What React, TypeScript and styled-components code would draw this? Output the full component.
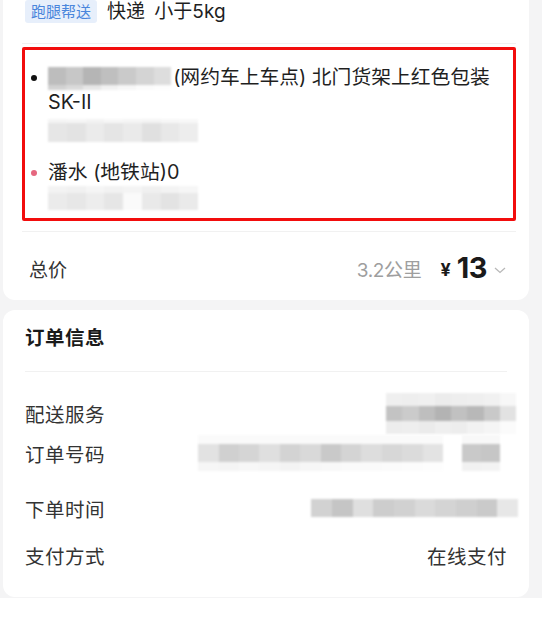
import React from "react";
import styled, { createGlobalStyle } from "styled-components";

const Global = createGlobalStyle`
  html, body { margin: 0; padding: 0; background: #ffffff; }
  body { font-family: Inter, "Noto Sans CJK SC", sans-serif; color: #222; }
  * { box-sizing: border-box; }
`;

const Screen = styled.div`
  width: 542px;
  height: 598px;
  background: #f4f4f5;
  padding-left: 3px;
  display: flex;
  flex-direction: column;
`;

const TopCard = styled.section`
  width: 526px;
  background: #ffffff;
  border-radius: 0 0 12px 12px;
  display: flex;
  flex-direction: column;
`;

const InfoCard = styled.section`
  width: 526px;
  margin-top: 10px;
  background: #ffffff;
  border-radius: 12px;
  padding: 14px 22px 22px 22px;
  display: flex;
  flex-direction: column;
`;

const Header = styled.div`
  height: 23px;
  padding-left: 22px;
  display: flex;
  align-items: center;
  gap: 10px;
`;

const Tag = styled.span`
  height: 23px;
  padding: 0 6px;
  border-radius: 3px;
  background: #e7effb;
  color: #4a86dc;
  font-size: 15px;
  line-height: 23px;
  display: inline-flex;
  align-items: center;
`;

const HeaderText = styled.span`
  font-size: 19px;
  line-height: 23px;
  color: #1f1f1f;
  word-spacing: 4px;
`;

const Divider = styled.div<{ $mt: number; $inset?: boolean }>`
  height: 1px;
  background: #f1f1f1;
  margin-top: ${(p) => p.$mt}px;
  margin-left: ${(p) => (p.$inset ? 19 : 0)}px;
  margin-right: ${(p) => (p.$inset ? 13 : 0)}px;
`;

const AddressBox = styled.div`
  margin: 3px 13px 0 19px;
  height: 174px;
  border: 3px solid #f20d0d;
  border-radius: 2px;
  padding: 15px 10px 0 6px;
  display: flex;
  flex-direction: column;
`;

const Stop = styled.div<{ $mt: number }>`
  display: flex;
  align-items: flex-start;
  margin-top: ${(p) => p.$mt}px;
`;

const Dot = styled.span<{ $color: string }>`
  width: 6px;
  height: 6px;
  border-radius: 50%;
  background: ${(p) => p.$color};
  margin-top: 10px;
  margin-right: 11px;
  flex: none;
`;

const StopBody = styled.div`
  display: flex;
  flex-direction: column;
`;

const StopText = styled.div`
  font-size: 19.8px;
  line-height: 25px;
  color: #1f1f1f;
  white-space: nowrap;
`;

const InlineMosaic = styled.span`
  display: inline-block;
  vertical-align: top;
  margin-top: 2px;
  margin-right: 2px;
`;

const MosaicGrid = styled.div<{ $cols: number; $cell: number }>`
  display: grid;
  grid-template-columns: repeat(${(p) => p.$cols}, ${(p) => p.$cell}px);
  filter: blur(1.3px);
`;

const Cell = styled.span<{ $c: string; $h: number }>`
  display: block;
  height: ${(p) => p.$h}px;
  background: ${(p) => p.$c};
`;

const MosaicSpace = styled.div<{ $mt: number; $mr?: number }>`
  margin-top: ${(p) => p.$mt}px;
  margin-right: ${(p) => p.$mr ?? 0}px;
`;

type MosaicProps = { cell: number; rows: { h: number; colors: string[] }[] };

const Mosaic: React.FC<MosaicProps> = ({ cell, rows }) => (
  <MosaicGrid $cols={rows[0].colors.length} $cell={cell}>
    {rows.map((r, ri) =>
      r.colors.map((c, ci) => <Cell key={`${ri}-${ci}`} $c={c} $h={r.h} />)
    )}
  </MosaicGrid>
);

const TotalRow = styled.div`
  height: 68px;
  padding: 4px 22px 0 26px;
  display: flex;
  align-items: center;
  justify-content: space-between;
`;

const TotalLabel = styled.span`
  font-size: 19px;
  color: #333;
`;

const PriceGroup = styled.div`
  display: flex;
  align-items: center;
`;

const Distance = styled.span`
  font-size: 19px;
  color: #9e9e9e;
  margin-right: 19px;
  letter-spacing: -0.3px;
`;

const Yen = styled.span`
  font-size: 18px;
  font-weight: 700;
  color: #1a1a1a;
  margin-right: 6px;
  margin-top: 3px;
`;

const Amount = styled.span`
  font-size: 29px;
  font-weight: 700;
  color: #1a1a1a;
  line-height: 30px;
  letter-spacing: -0.5px;
`;

const Chevron = styled.svg`
  width: 14px;
  height: 10px;
  margin-left: 6px;
  margin-top: 4px;
`;

const Title = styled.h2`
  margin: 0;
  font-size: 19.5px;
  line-height: 28px;
  font-weight: 700;
  color: #1a1a1a;
  letter-spacing: 0.5px;
`;

const Row = styled.div<{ $mt: number }>`
  height: 40px;
  margin-top: ${(p) => p.$mt}px;
  display: flex;
  align-items: center;
  justify-content: space-between;
`;

const Label = styled.span`
  font-size: 19.5px;
  color: #333;
  letter-spacing: 0.5px;
`;

const Value = styled.span`
  font-size: 19.5px;
  color: #333;
  letter-spacing: 0.5px;
`;

const ValueGroup = styled.div<{ $gap: number; $mr?: number }>`
  display: flex;
  align-items: center;
  gap: ${(p) => p.$gap}px;
  margin-right: ${(p) => p.$mr ?? 0}px;
`;

const addr1Mosaic: MosaicProps = {
  cell: 17.6,
  rows: [
    { h: 18, colors: ["#bdbdbd", "#c7c7c7", "#b5b5b5", "#bfbfbf", "#cacaca", "#d4d4d4", "#dddddd"] },
    { h: 5, colors: ["#d2d2d2", "#dadada", "#e6e6e6", "#f1f1f1", "#f7f7f7", "#fbfbfb", "#fdfdfd"] },
  ],
};

const blur1: MosaicProps = {
  cell: 18.75,
  rows: [
    { h: 4, colors: ["#f4f4f4", "#f6f6f6", "#f3f3f3", "#f7f7f7", "#f5f5f5", "#f4f4f4", "#f7f7f7", "#f8f8f8"] },
    { h: 19, colors: ["#e6e6e6", "#e3e3e3", "#ebebeb", "#e5e5e5", "#eaeaea", "#e0e0e0", "#e8e8e8", "#ededed"] },
  ],
};

const blur2: MosaicProps = {
  cell: 18.75,
  rows: [
    { h: 7, colors: ["#f3f3f3", "#f1f1f1", "#f5f5f5", "#f2f2f2", "#f4f4f4", "#f0f0f0", "#f3f3f3", "#f6f6f6"] },
    { h: 17, colors: ["#ebebeb", "#e7e7e7", "#ededed", "#e6e6e6", "#fafafa", "#e9e9e9", "#e3e3e3", "#eaeaea"] },
  ],
};

const serviceMosaic: MosaicProps = {
  cell: 16.25,
  rows: [
    { h: 13, colors: ["#efefef", "#eeeeee", "#f0f0f0", "#ececec", "#eeeeee", "#efefef", "#f1f1f1", "#f7f7f7"] },
    { h: 15, colors: ["#c3c3c3", "#cbcbcb", "#bebebe", "#b3b3b3", "#c1c1c1", "#b8b8b8", "#c9c9c9", "#e2e2e2"] },
    { h: 13, colors: ["#ededed", "#eeeeee", "#ebebeb", "#efefef", "#ededed", "#f2f2f2", "#f5f5f5", "#fbfbfb"] },
  ],
};

const orderMosaic: MosaicProps = {
  cell: 20.4,
  rows: [
    { h: 9, colors: Array(12).fill("#fafafa") },
    { h: 18, colors: ["#e2e2e2", "#d0d0d0", "#d5d5d5", "#dfdfdf", "#d3d3d3", "#d9d9d9", "#c9c9c9", "#d4d4d4", "#dddddd", "#d7d7d7", "#dbdbdb", "#e3e3e3"] },
    { h: 9, colors: ["#f6f6f6", "#f4f4f4", "#f7f7f7", "#f5f5f5", "#f3f3f3", "#f6f6f6", "#f8f8f8", "#fafafa", "#fafafa", "#fbfbfb", "#fcfcfc", "#fdfdfd"] },
  ],
};

const orderTailMosaic: MosaicProps = {
  cell: 19,
  rows: [
    { h: 9, colors: ["#f8f8f8", "#f8f8f8"] },
    { h: 18, colors: ["#c9c9c9", "#c6c6c6"] },
    { h: 9, colors: ["#f1f1f1", "#f3f3f3"] },
  ],
};

const timeMosaic: MosaicProps = {
  cell: 20.7,
  rows: [
    { h: 18, colors: ["#d2d2d2", "#c5c5c5", "#dfdfdf", "#cdcdcd", "#d1d1d1", "#dadada", "#d4d4d4", "#cfcfcf", "#cacaca", "#e7e7e7"] },
  ],
};

export default function App() {
  return (
    <>
      <Global />
      <Screen>
        <TopCard>
          <Header>
            <Tag>跑腿帮送</Tag>
            <HeaderText>快递 小于5kg</HeaderText>
          </Header>
          <Divider $mt={20} $inset />
          <AddressBox>
            <Stop $mt={0}>
              <Dot $color="#111" />
              <StopBody>
                <StopText>
                  <InlineMosaic>
                    <Mosaic {...addr1Mosaic} />
                  </InlineMosaic>
                  (网约车上车点) 北门货架上红色包装
                  <br />
                  SK-II
                </StopText>
                <MosaicSpace $mt={4}>
                  <Mosaic {...blur1} />
                </MosaicSpace>
              </StopBody>
            </Stop>
            <Stop $mt={18}>
              <Dot $color="#e5677f" />
              <StopBody>
                <StopText>潘水 (地铁站)0</StopText>
                <MosaicSpace $mt={1}>
                  <Mosaic {...blur2} />
                </MosaicSpace>
              </StopBody>
            </Stop>
          </AddressBox>
          <Divider $mt={10} $inset />
          <TotalRow>
            <TotalLabel>总价</TotalLabel>
            <PriceGroup>
              <Distance>3.2公里</Distance>
              <Yen>¥</Yen>
              <Amount>13</Amount>
              <Chevron viewBox="0 0 14 10">
                <polyline points="2,3 7,7.5 12,3" fill="none" stroke="#b8b8b8" strokeWidth="1.3" />
              </Chevron>
            </PriceGroup>
          </TotalRow>
        </TopCard>
        <InfoCard>
          <Title>订单信息</Title>
          <Divider $mt={19} />
          <Row $mt={21}>
            <Label>配送服务</Label>
            <ValueGroup $gap={0} $mr={-9}>
              <Mosaic {...serviceMosaic} />
            </ValueGroup>
          </Row>
          <Row $mt={0}>
            <Label>订单号码</Label>
            <ValueGroup $gap={19} $mr={7}>
              <Mosaic {...orderMosaic} />
              <Mosaic {...orderTailMosaic} />
            </ValueGroup>
          </Row>
          <Row $mt={15}>
            <Label>下单时间</Label>
            <ValueGroup $gap={0} $mr={-11}>
              <Mosaic {...timeMosaic} />
            </ValueGroup>
          </Row>
          <Row $mt={7}>
            <Label>支付方式</Label>
            <Value>在线支付</Value>
          </Row>
        </InfoCard>
      </Screen>
    </>
  );
}
